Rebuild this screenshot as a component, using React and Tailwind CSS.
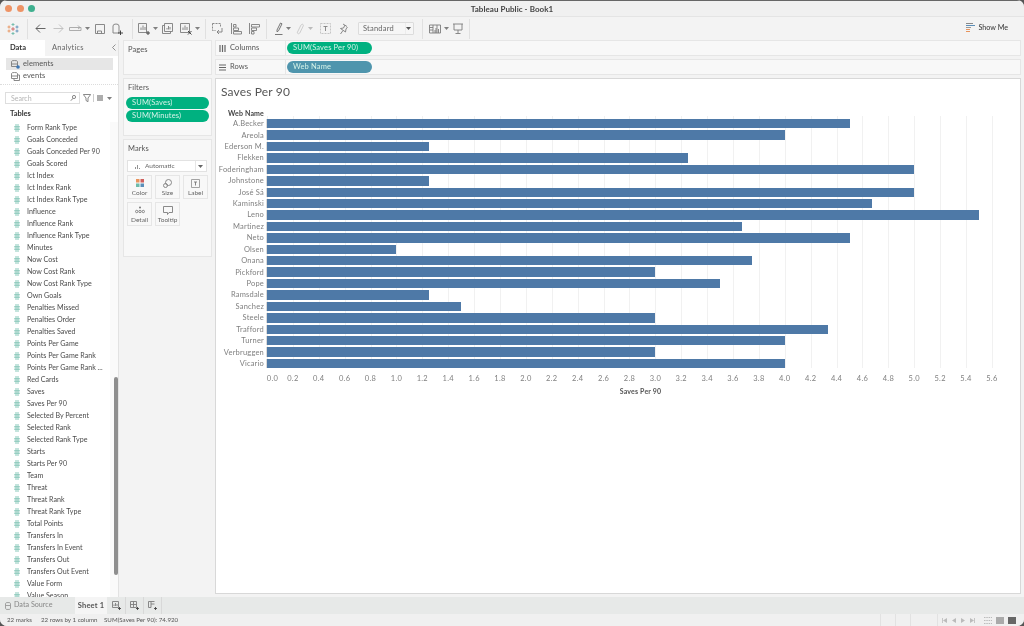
import React from "react";

const fields = ["Form Rank Type","Goals Conceded","Goals Conceded Per 90","Goals Scored","Ict Index","Ict Index Rank","Ict Index Rank Type","Influence","Influence Rank","Influence Rank Type","Minutes","Now Cost","Now Cost Rank","Now Cost Rank Type","Own Goals","Penalties Missed","Penalties Order","Penalties Saved","Points Per Game","Points Per Game Rank","Points Per Game Rank ...","Red Cards","Saves","Saves Per 90","Selected By Percent","Selected Rank","Selected Rank Type","Starts","Starts Per 90","Team","Threat","Threat Rank","Threat Rank Type","Total Points","Transfers In","Transfers In Event","Transfers Out","Transfers Out Event","Value Form","Value Season"];
const bars = [["A.Becker",4.5],["Areola",4],["Ederson M.",1.25],["Flekken",3.25],["Foderingham",5],["Johnstone",1.25],["José Sá",5],["Kaminski",4.67],["Leno",5.5],["Martinez",3.67],["Neto",4.5],["Olsen",1],["Onana",3.75],["Pickford",3],["Pope",3.5],["Ramsdale",1.25],["Sanchez",1.5],["Steele",3],["Trafford",4.33],["Turner",4],["Verbruggen",3],["Vicario",4]];
const ticks = ["0.0","0.2","0.4","0.6","0.8","1.0","1.2","1.4","1.6","1.8","2.0","2.2","2.4","2.6","2.8","3.0","3.2","3.4","3.6","3.8","4.0","4.2","4.4","4.6","4.8","5.0","5.2","5.4","5.6"];
const UNIT = 129.45;

const Ic = ({ w = 16, h = 16, children, className = "", s = "#7d7d7d" }) => (
  <svg width={w} height={h} viewBox={`0 0 ${w} ${h}`} fill="none" stroke={s} strokeWidth="0.9" className={`shrink-0 ${className}`}>{children}</svg>
);
const Caret = ({ c = "#808080", className = "" }) => (
  <svg width="5" height="3" viewBox="0 0 5 3" className={`shrink-0 ${className}`}><path d="M0 0h5L2.5 3z" fill={c} /></svg>
);
const Sep = ({ className = "" }) => <div className={`w-px h-[20px] bg-[#e0e0e0] shrink-0 ${className}`} />;
const Hash = () => (
  <svg width="6" height="8" viewBox="0 0 6 8" fill="none" stroke="#6dbbaa" strokeWidth="0.8" className="shrink-0">
    <path d="M2 0v8M4 0v8M0 2.800h6M0 5.200h6" />
  </svg>
);
const Pill = ({ children, color = "bg-[#00b180]", w = "w-[84px]" }) => (
  <div className={`${w} h-[12px] rounded-full ${color} text-[7.5px] leading-[12px] tracking-[0.15px] text-[#d5f2e8] pl-[6px] whitespace-nowrap overflow-hidden`}>{children}</div>
);
const MarkBtn = ({ label, children }) => (
  <div className="w-[25px] h-[24px] border border-[#e6e6e6] flex flex-col items-center justify-between pt-[3px] pb-[1px]">
    {children}
    <span className="text-[6.5px] leading-[8px] text-[#666]">{label}</span>
  </div>
);

function Toolbar() {
  return (
    <div className="h-[23px] bg-[#f3f3f3] flex items-center pl-[7px] pr-[16px] shrink-0">
      <svg width="12" height="12" viewBox="0 0 12 12" className="shrink-0">
        <g stroke="#e8945d" strokeWidth="0.9"><path d="M2 2.500v3M.5 4h3M2 6.500v3M.5 8h3" /></g>
        <g stroke="#5b8fb9" strokeWidth="0.9"><path d="M10 2.500v3M8.500 4h3M10 6.500v3M8.500 8h3" /></g>
        <g stroke="#6dbbaa" strokeWidth="0.9"><path d="M6 0v3M4.500 1.500h3M6 9v3M4.500 10.500h3" /></g>
        <g stroke="#d0605d" strokeWidth="0.9"><path d="M6 4.200v3.600M4.200 6h3.600" /></g>
      </svg>
      <Sep className="ml-[8px]" />
      <Ic w={11} h={11} s="#555" className="ml-[7px]"><path d="M10.500 5.500H1M5 1.500l-4 4 4 4" /></Ic>
      <Ic w={11} h={11} s="#bdbdbd" className="ml-[7px]"><path d="M.5 5.500H10M6 1.500l4 4-4 4" /></Ic>
      <Ic w={13} h={9} s="#a5a5a5" className="ml-[5px]"><path d="M.5 3.500h9.500M.5 3.500v3h11.500v-3h-2M9 1.500l2 2-2 1.500" /></Ic>
      <Caret className="ml-[3px]" />
      <Ic w={10} h={10} className="ml-[5px]"><path d="M.5.500h9v9h-9zM2.500 9.500V7h4v2.500" /></Ic>
      <Ic w={11} h={12} className="ml-[7px]"><path d="M1 3a3 2 0 0 1 6 0v7H1z" /><path d="M6 10h5M8.500 7.500v5" stroke="#333" /></Ic>
      <Sep className="ml-[9px]" />
      <Ic w={12} h={12} className="ml-[5px]"><path d="M.5.500v9h8V.5zM3 7V4.500M5 7V2.500M7 7V4" /><path d="M8 10h4M10 8v4" stroke="#333" /></Ic>
      <Caret className="ml-[3px]" />
      <Ic w={11} h={11} className="ml-[4px]"><path d="M2.500 2.500H.5v8h8V8.500M2.500.5h8v8h-8zM5 6.500V5M6.500 6.500V3M8 6.500V4" /></Ic>
      <Ic w={12} h={12} className="ml-[7px]"><path d="M.5.500h9v9h-9zM3 7V4.500M5 7V2.500M7 7V4" /><path d="M8 8l3.500 3.500M11.500 8L8 11.500" stroke="#333" /></Ic>
      <Caret className="ml-[3px]" />
      <Sep className="ml-[5px]" />
      <Ic w={11} h={12} className="ml-[6px]"><path d="M.5.500h8v4M.5.500v7h3" strokeDasharray="2 1" /><path d="M10 5v4H5M7 7l-2 2 2 2" /></Ic>
      <Ic w={12} h={12} className="ml-[7px]"><path d="M1.500 0v11M3.500 1.500h2.500v2.500H3.500zM3.500 5h5v2.500h-5zM3.500 8.500h8V11h-8z" /></Ic>
      <Ic w={12} h={12} className="ml-[6px]"><path d="M1.500 0v11M3.500 1.500h8V4h-8zM3.500 5h5v2.500h-5zM3.500 8.500h2.500V11H3.500z" /></Ic>
      <Sep className="ml-[6px]" />
      <Ic w={8} h={13} s="#6a6a6a" className="ml-[8px]"><path d="M2 8l3.500-7L7 1.800l-3.500 7-1.500 1zM0 12.500h7.500" /></Ic>
      <Caret className="ml-[3px]" />
      <Ic w={8} h={12} s="#c8c8c8" className="ml-[5px]"><path d="M1.500 9L5 2c1-1.500 3-.5 2.200 1L3.800 10c-1 1.500-3 .500-2.300-1z" /></Ic>
      <Caret c="#bbb" className="ml-[4px]" />
      <Ic w={11} h={11} s="#c0c0c0" className="ml-[7px]"><path d="M.5.500h10v10H.5z" strokeDasharray="2 1" /><path d="M3.500 3.500h4M5.500 3.500v4.500" stroke="#808080" /></Ic>
      <Ic w={8} h={12} className="ml-[9px]"><path d="M3 1l4 2.500M5 2L3.500 5 .5 5.500l5 3.500L6 6l1.500-2M3 7.500L.5 11" /></Ic>
      <div className="ml-[10px] w-[56px] h-[13px] bg-[#f6f6f6] border border-[#dcdcdc] rounded-[1px] flex items-center text-[7.5px] tracking-[0.2px] text-[#666] pl-[4px] shrink-0 relative">
        Standard
        <div className="absolute right-[7px] top-0 bottom-0 w-px bg-[#ececec]" />
        <Caret c="#555" className="absolute right-[2px] top-[4px]" />
      </div>
      <Sep className="ml-[8px]" />
      <Ic w={12} h={10} className="ml-[6px]"><path d="M.5 1h11v8H.5zM4 1v8M8 1v8M.5 3.500H4M.5 6H4M6 9V6M7 9V4M9.500 9V5" /></Ic>
      <Caret className="ml-[3px]" />
      <Ic w={10} h={11} className="ml-[4px]"><path d="M0 1h10M1 1v6h8V1M5 7v3.500M2.500 10.500h5" /></Ic>
      <Sep className="ml-[6px]" />
      <div className="ml-auto flex items-center gap-[3px]">
        <svg width="9" height="10" viewBox="0 0 9 10" className="shrink-0">
          <path d="M0 .5h7" stroke="#888" /><path d="M0 2.500h9" stroke="#5b8fb9" /><path d="M0 4.500h5" stroke="#999" /><path d="M0 6.500h4" stroke="#e8945d" /><path d="M0 8.500h4" stroke="#e8945d" />
        </svg>
        <span className="text-[7.200px] text-[#333]">Show Me</span>
      </div>
    </div>
  );
}

function DataPane() {
  return (
    <div className="w-[118px] shrink-0 bg-white flex flex-col overflow-hidden">
      <div className="h-[16px] flex shrink-0 bg-[#f3f3f3] text-[7.5px] leading-[15px] relative">
        <div className="w-[45px] bg-white font-bold text-[#333] pl-[10px]">Data</div>
        <div className="pl-[7px] text-[#666] tracking-[0.2px]">Analytics</div>
        <svg width="4" height="7" viewBox="0 0 4 7" fill="none" stroke="#777" strokeWidth="0.8" className="absolute left-[112px] top-[4px]"><path d="M3.500.5L.5 3.500l3 3" /></svg>
      </div>
      <div className="h-[28px] shrink-0 pt-[2px] pl-[6px] pr-[5px] text-[7.5px] text-[#555] tracking-[0.1px]">
        <div className="h-[12px] bg-[#e6e6e6] flex items-center pl-[5px] gap-[3px]">
          <Ic w={9} h={9}><path d="M.5 1.500a3 1 0 0 1 6 0v5h-6zM.5 4h6" /><circle cx="7" cy="7" r="1.800" fill="#3f78b5" stroke="none" /></Ic>
          elements
        </div>
        <div className="h-[12px] flex items-center pl-[5px] gap-[3px]">
          <Ic w={9} h={9}><path d="M.5 1.500a3 1 0 0 1 6 0v5h-6zM.5 4h6M7 3h1.500v5.500H3V7" /></Ic>
          events
        </div>
      </div>
      <div className="border-t border-dotted border-[#dcdcdc] shrink-0" />
      <div className="h-[12px] mt-[7px] shrink-0 flex items-center pl-[5px]">
        <div className="w-[75px] h-[12px] border border-[#dedede] flex items-center justify-between pl-[5px] pr-[3px] text-[7px] text-[#b5b5b5] shrink-0">
          Search
          <Ic w={6} h={6}><circle cx="4" cy="2" r="1.600" /><path d="M3 3.500L.5 5.800" /></Ic>
        </div>
        <Ic w={8} h={8} className="ml-[3px]"><path d="M.3.500h7.400L5 4v3.700L3 6.500V4z" /></Ic>
        <div className="w-px h-[8px] bg-[#ccc] ml-[2px]" />
        <Ic w={7} h={6} s="#777" className="ml-[3px]"><path d="M1 0v6M3 0v6M5 0v6" strokeWidth="1.200" /></Ic>
        <Caret className="ml-[3px]" />
      </div>
      <div className="h-[10px] mt-[5px] shrink-0 pl-[10px] text-[7.5px] leading-[10px] font-bold text-[#333]">Tables</div>
      <div className="relative flex-1 overflow-hidden mt-[3px]">
        <div className="absolute right-0 top-0 bottom-0 w-[8px] bg-[#fafafa]" />
        <div className="relative">
          {fields.map((f) => (
            <div key={f} className="h-[12px] flex items-center text-[7.100px] text-[#4a4a4a] whitespace-nowrap">
              <span className="w-[27px] flex pl-[14px] shrink-0"><Hash /></span>{f}
            </div>
          ))}
        </div>
        <div className="absolute right-0 top-[255px] w-[4px] h-[198px] rounded-full bg-[#8e8e8e]" />
      </div>
    </div>
  );
}

function Card({ title, className = "", children }) {
  return (
    <div className={`bg-[#f8f8f8] border border-[#e6e6e6] ${className}`}>
      <div className="text-[7.5px] leading-[10px] tracking-[0.1px] text-[#555] pl-[4px] pt-[4px]">{title}</div>
      {children}
    </div>
  );
}

function MiddlePane() {
  return (
    <div className="w-[97px] shrink-0 pl-[4px] pr-[3px] flex flex-col gap-[3px] bg-[#f3f3f3] border-l border-[#e2e2e2]">
      <Card title="Pages" className="h-[35px]" />
      <Card title="Filters" className="h-[58px]">
        <div className="flex flex-col gap-[1px] pl-[2px] pt-[4px]">
          <Pill w="w-[83px]">SUM(Saves)</Pill>
          <Pill w="w-[83px]">SUM(Minutes)</Pill>
        </div>
      </Card>
      <Card title="Marks" className="h-[118px]">
        <div className="ml-[3px] w-[80px] mt-[6px] h-[12px] bg-white border border-[#e2e2e2] flex items-center text-[6.5px] text-[#666] pl-[7px] relative">
          <svg width="5" height="5" viewBox="0 0 5 5" fill="none" stroke="#777" strokeWidth="0.8" className="mr-[5px]"><path d="M.5 5V3M2.500 5V1M4.500 5V4" /></svg>
          Automatic
          <div className="absolute right-[10px] top-0 bottom-0 w-px bg-[#e6e6e6]" />
          <Caret c="#666" className="absolute right-[3px] top-[4px]" />
        </div>
        <div className="grid grid-cols-[25px_25px_25px] gap-x-[3px] gap-y-[3px] pl-[3px] mt-[3px]">
          <MarkBtn label="Color">
            <svg width="8" height="8" viewBox="0 0 8 8"><rect width="3.500" height="3.500" fill="#e8945d" /><rect x="4.500" width="3.500" height="3.500" fill="#d0605d" /><rect y="4.500" width="3.500" height="3.500" fill="#6dbbaa" /><rect x="4.500" y="4.500" width="3.500" height="3.500" fill="#5b8fb9" /></svg>
          </MarkBtn>
          <MarkBtn label="Size">
            <Ic w={9} h={9}><circle cx="5.500" cy="3.500" r="3" /><circle cx="2.500" cy="6.500" r="2" /></Ic>
          </MarkBtn>
          <MarkBtn label="Label">
            <Ic w={9} h={9} s="#999"><path d="M.5.500h8v8h-8z" /><path d="M3 3h3M4.500 3v3.500" stroke="#777" /></Ic>
          </MarkBtn>
          <MarkBtn label="Detail">
            <Ic w={10} h={8}><circle cx="5" cy="1.500" r="1" fill="#777" stroke="none" /><circle cx="1.700" cy="5.500" r="1.200" /><circle cx="5" cy="5.500" r="1.200" /><circle cx="8.300" cy="5.500" r="1.200" /></Ic>
          </MarkBtn>
          <MarkBtn label="Tooltip">
            <Ic w={10} h={9}><path d="M.5.500h9v6H6L4.500 8.500V6.500H.5z" /></Ic>
          </MarkBtn>
        </div>
      </Card>
    </div>
  );
}

function Shelf({ label, icon, pill, color }) {
  return (
    <div className="h-[16px] shrink-0 flex bg-[#f8f8f8] border border-[#e6e6e6]">
      <div className="w-[70px] flex items-center pl-[3px] gap-[4px] text-[7.5px] tracking-[0.1px] text-[#555] border-r border-[#e6e6e6] shrink-0">
        {icon}{label}
      </div>
      <div className="flex items-center pl-[1px]"><Pill color={color} w="w-[85px]">{pill}</Pill></div>
    </div>
  );
}

function Chart() {
  return (
    <div className="flex-1 min-h-0 bg-white border border-[#d8d8d8] pl-[5px] pt-[5px] mb-[3px]">
      <div className="text-[12px] leading-[16px] tracking-[0.15px] text-[#555]">Saves Per 90</div>
      <div className="w-[43px] h-[8px] mt-[9px] text-[7px] leading-[8px] font-bold tracking-[0.15px] text-[#444] whitespace-nowrap flex justify-end">Web Name</div>
      <div className="relative mt-[2px]">
        <div className="absolute left-[46px] top-[-3px] bottom-0">
          {ticks.map((t, i) => (
            <div key={t} className="absolute top-0 bottom-0 w-px bg-[#f1f1f1]" style={{ left: i * 0.2 * UNIT }} />
          ))}
        </div>
        <div className="flex flex-col gap-[2px] relative">
          {bars.map(([n, v]) => (
            <div key={n} className="flex h-[9.430px] items-center">
              <div className="w-[43px] shrink-0 flex justify-end text-[7.5px] tracking-[0.2px] text-[#808080] whitespace-nowrap">{n}</div>
              <div className="ml-[2px] w-px self-stretch bg-[#dadada]" />
              <div className="h-full bg-[#4e79a7]" style={{ width: v * UNIT }} />
            </div>
          ))}
        </div>
      </div>
      <div className="relative h-[9px] mt-[6px] ml-[46px]">
        {ticks.map((t, i) => (
          <span key={t} className="absolute top-0 -translate-x-1/2 text-[7.5px] leading-[9px] tracking-[0.3px] text-[#808080]" style={{ left: i === 0 ? 5.500 : i * 0.2 * UNIT }}>{t}</span>
        ))}
      </div>
      <div className="ml-[46px] mt-[4px] w-[747px] text-center text-[7px] leading-[9px] font-bold tracking-[0.15px] text-[#555]">Saves Per 90</div>
    </div>
  );
}

export default function App() {
  return (
    <div className="w-[1024px] h-[626px] overflow-hidden bg-[#555] font-['Lato',sans-serif] antialiased blur-[0.3px]">
      <div className="w-full h-full overflow-hidden rounded-[7px] flex flex-col bg-[#f3f3f3]">
        <div className="h-[16px] shrink-0 bg-[#f0f0f0] border-t border-[#666] flex items-center relative">
          <div className="flex items-center gap-[4.500px] pl-[5px]">
            <div className="w-[7px] h-[7px] rounded-full bg-[#ee9365]" />
            <div className="w-[7px] h-[7px] rounded-full bg-[#ee9365]" />
            <div className="w-[7px] h-[7px] rounded-full bg-[#3fb08f]" />
          </div>
          <div className="flex-1 text-center text-[8px] font-bold tracking-[0.05px] text-[#444] pr-[35px]">Tableau Public - Book1</div>
        </div>
        <div className="h-px bg-[#e4e4e4] shrink-0" />
        <Toolbar />
        <div className="flex-1 min-h-0 flex">
          <DataPane />
          <MiddlePane />
          <div className="flex-1 min-w-0 flex flex-col gap-[3px] pr-[3px]">
            <Shelf label="Columns" pill="SUM(Saves Per 90)" color="bg-[#00b180]" icon={<Ic w={7} h={7} s="#666"><path d="M1 0v7M3.500 0v7M6 0v7" strokeWidth="1.200" /></Ic>} />
            <Shelf label="Rows" pill="Web Name" color="bg-[#4f95ad]" icon={<Ic w={7} h={7} s="#666"><path d="M0 1h7M0 3.500h7M0 6h7" strokeWidth="1.100" /></Ic>} />
            <Chart />
          </div>
        </div>
        <div className="h-[17px] shrink-0 flex bg-[#e7e9e8]">
          <div className="w-[75px] flex items-center gap-[3px] pl-[5px] text-[7.2px] text-[#888]">
            <Ic w={6} h={8} s="#999"><path d="M.5 1.500a2.500 1 0 0 1 5 0v5a2.500 1 0 0 1-5 0zM.5 3.500h5" /></Ic>
            Data Source
          </div>
          <div className="w-[32px] bg-[#f5f5f5] flex items-center justify-center text-[7.5px] font-bold tracking-[0.15px] text-[#555]">Sheet 1</div>
          <div className="w-[1px]" />
          <div className="w-[18px] border-r border-[#d8d8d8] flex items-center justify-center">
            <Ic w={9} h={9}><path d="M.5.500h6v6h-6zM2 5V3.500M3.500 5V2M5 5V3" /><path d="M6 7.500h3M7.500 6v3" stroke="#444" /></Ic>
          </div>
          <div className="w-[18px] border-r border-[#d8d8d8] flex items-center justify-center">
            <Ic w={9} h={9}><path d="M.5.500h6v6h-6zM.5 3.500h6M3.500.5v6" /><path d="M6 7.500h3M7.500 6v3" stroke="#444" /></Ic>
          </div>
          <div className="w-[18px] border-r border-[#d8d8d8] flex items-center justify-center">
            <Ic w={9} h={9}><path d="M.5.500h6M.5.500v6h2.500v-6M3 3h3.500" /><path d="M6 7.500h3M7.500 6v3" stroke="#444" /></Ic>
          </div>
        </div>
        <div className="h-[12px] shrink-0 flex items-center bg-[#f0f0f0] text-[6.200px] text-[#555] pl-[7px] whitespace-nowrap">
          <span className="w-[34px] shrink-0">22 marks</span>
          <span className="w-[63px] shrink-0">22 rows by 1 column</span>
          <span>SUM(Saves Per 90): 74.920</span>
          <div className="ml-auto flex items-center h-full pr-[8px]">
            <span className="w-[15px] h-full border-l border-[#e2e2e2]" />
            <span className="w-[15px] h-full border-l border-[#e2e2e2]" />
            <span className="w-[27px] h-full border-l border-[#e2e2e2]" />
            <span className="h-full border-l border-[#e2e2e2]" />
            <svg width="5" height="5" viewBox="0 0 5 5" className="ml-[4px]"><path d="M5 0v5L1 2.500zM0 0h.8v5H0z" fill="#bbb" /></svg>
            <svg width="4" height="5" viewBox="0 0 4 5" className="ml-[5px]"><path d="M4 0v5L0 2.500z" fill="#bbb" /></svg>
            <svg width="4" height="5" viewBox="0 0 4 5" className="ml-[5px]"><path d="M0 0v5l4-2.500z" fill="#bbb" /></svg>
            <svg width="5" height="5" viewBox="0 0 5 5" className="ml-[5px]"><path d="M0 0v5l4-2.500zM4.200 0H5v5h-.8z" fill="#bbb" /></svg>
            <svg width="8" height="7" viewBox="0 0 8 7" fill="none" stroke="#bbb" strokeDasharray="1.500 .8" className="ml-[9px]"><path d="M0 .5h8M0 3.500h8M0 6.500h8" /></svg>
            <svg width="8" height="7" viewBox="0 0 8 7" className="ml-[4px]"><rect width="8" height="7" fill="#aaa" /></svg>
            <svg width="8" height="7" viewBox="0 0 8 7" className="ml-[4px]"><rect width="8" height="7" fill="#666" /></svg>
          </div>
        </div>
      </div>
    </div>
  );
}
